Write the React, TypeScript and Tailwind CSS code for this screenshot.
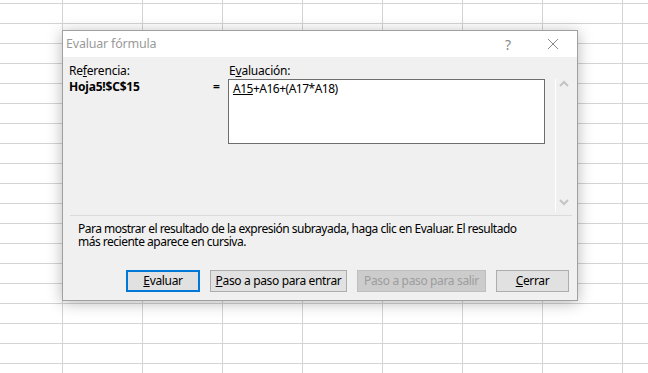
import React from "react";

const font = { fontFamily: '"Noto Sans", "Open Sans", sans-serif' };

function Grid() {
  const rows = Array.from({ length: 21 });
  const cols = Array.from({ length: 9 });
  return (
    <div className="-ml-[17px] -mt-[16px] flex flex-col">
      {rows.map((_, r) => (
        <div key={r} className="flex">
          {cols.map((_, c) => (
            <div key={c} className="w-[80px] h-[20px] shrink-0 border-r border-b border-[#d4d4d4]" />
          ))}
        </div>
      ))}
    </div>
  );
}

function Btn({ children, primary, disabled, w }: { children: React.ReactNode; primary?: boolean; disabled?: boolean; w: string }) {
  const base = "h-[22px] flex items-center justify-center text-[12px] tracking-[-0.35px] ";
  const cls = disabled
    ? "bg-[#cccccc] border border-[#bfbfbf] text-[#9d9d9d]"
    : primary
    ? "bg-[#e1e1e1] border-2 border-[#0078d7] text-[#000]"
    : "bg-[#e1e1e1] border border-[#adadad] text-[#000]";
  return <div className={base + cls + " " + w}>{children}</div>;
}

export default function App() {
  return (
    <div className="relative w-[648px] h-[373px] overflow-hidden bg-white" style={font}>
      <Grid />
      <div className="absolute left-[62px] top-[30px] w-[516px] h-[271px] border border-[#a0a0a0] bg-[#f0f0f0] shadow-[0_2px_14px_rgba(0,0,0,0.28)] flex flex-col">
        <div className="h-[26px] bg-white flex items-center pl-[3px] pr-[16px] shrink-0">
          <span className="text-[12.5px] text-[#9a9a9a] tracking-[-0.2px]">Evaluar fórmula</span>
          <span className="ml-auto text-[14px] text-[#8a8a8a] mr-[36px]">?</span>
          <svg width="12" height="12" viewBox="0 0 12 12" className="mr-[2px]">
            <path d="M1 1L11 11M11 1L1 11" stroke="#8a8a8a" strokeWidth="1" />
          </svg>
        </div>
        <div className="flex flex-col flex-1">
          <div className="flex pt-[6px]">
            <div className="w-[142px] pl-[6px] text-[12px] text-black leading-[16px] tracking-[-0.2px]">
              <div>Re<span className="underline">f</span>erencia:</div>
              <div className="font-bold">Hoja5!$C$15</div>
            </div>
            <div className="w-[23px] pt-[16px] text-[12px] leading-[16px] text-black font-bold text-center">=</div>
            <div className="flex flex-col">
              <div className="text-[12px] leading-[16px] pl-[1px] text-black tracking-[-0.2px]">E<span className="underline">v</span>aluación:</div>
              <div className="w-[317px] h-[65px] border border-[#6e6e6e] bg-white pl-[4px] pt-[1px] text-[12px] leading-[15px] text-black tracking-[-0.5px]">
                <span className="underline">A15</span>+A16+(A17*A18)
              </div>
            </div>
            <div className="ml-[10px] mt-[16px] flex">
              <div className="w-[1px] h-[133px] bg-white" />
              <div className="flex flex-col justify-between ml-[3px] h-[127px] pt-[1px]">
                <svg width="10" height="7" viewBox="0 0 10 7">
                  <path d="M1 6L5 2L9 6" stroke="#c4c4c4" strokeWidth="2" fill="none" />
                </svg>
                <svg width="10" height="7" viewBox="0 0 10 7">
                  <path d="M1 1L5 5L9 1" stroke="#c4c4c4" strokeWidth="2" fill="none" />
                </svg>
              </div>
            </div>
          </div>
          <div className="ml-[7px] w-[502px] h-[1px] bg-[#dadada] mt-[3px]" />
          <div className="pl-[15px] pt-[6px] text-[12px] leading-[13px] text-black tracking-[-0.5px]">
            <div>Para mostrar el resultado de la expresión subrayada, haga clic en Evaluar. El resultado</div>
            <div>más reciente aparece en cursiva.</div>
          </div>
          <div className="flex mt-auto mb-[8px] pl-[63px] gap-[10px]">
            <Btn primary w="w-[74px]"><span><span className="underline">E</span>valuar</span></Btn>
            <Btn w="w-[137px]"><span><span className="underline">P</span>aso a paso para entrar</span></Btn>
            <Btn disabled w="w-[129px]">Paso a paso para salir</Btn>
            <Btn w="w-[73px]"><span><span className="underline">C</span>errar</span></Btn>
          </div>
        </div>
      </div>
    </div>
  );
}
